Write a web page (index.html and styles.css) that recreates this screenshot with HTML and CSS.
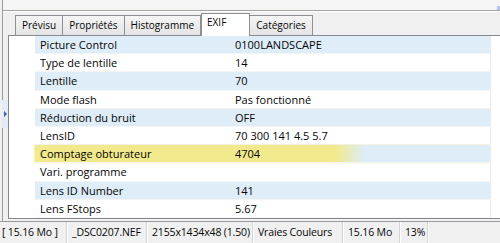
FILE: index.html
```html
<!DOCTYPE html>
<html>
	<head>
		<meta charset="utf-8">
		<title>EXIF</title>
		<link rel="stylesheet" href="styles.css">
	</head>
	<body>
		<div class="frame">
			<div class="topfield"><span class="scrollnub"></span></div>

			<div class="tabs">
				<div class="tab">Prévisu</div>
				<div class="tab">Propriétés</div>
				<div class="tab">Histogramme</div>
				<div class="tab active">EXIF</div>
				<div class="tab">Catégories</div>
			</div>

			<div class="panel">
				<div class="splitter">
					<div class="grip"><span class="arrow"></span></div>
				</div>
				<div class="grid">
					<div class="row alt"><span class="name">Picture Control</span><span class="val">0100LANDSCAPE</span></div>
					<div class="row"><span class="name">Type de lentille</span><span class="val">14</span></div>
					<div class="row alt"><span class="name">Lentille</span><span class="val">70</span></div>
					<div class="row"><span class="name">Mode flash</span><span class="val">Pas fonctionné</span></div>
					<div class="row alt"><span class="name">Réduction du bruit</span><span class="val">OFF</span></div>
					<div class="row"><span class="name">LensID</span><span class="val">70 300 141 4.5 5.7</span></div>
					<div class="row alt marked"><span class="name">Comptage obturateur</span><span class="val">4704</span></div>
					<div class="row"><span class="name">Vari. programme</span><span class="val"></span></div>
					<div class="row alt"><span class="name">Lens ID Number</span><span class="val">141</span></div>
					<div class="row"><span class="name">Lens FStops</span><span class="val">5.67</span></div>
				</div>
			</div>
		</div>

		<div class="status">
			<span class="cell size">[ 15.16 Mo ]</span>
			<span class="cell file">_DSC0207.NEF</span>
			<span class="cell dims">2155x1434x48 (1.50)</span>
			<span class="cell mode">Vraies Couleurs</span>
			<span class="cell mem">15.16 Mo</span>
			<span class="cell zoom">13%</span>
		</div>
	</body>
</html>
```

FILE: styles.css
```css
body{
	margin: 0;
	width: 500px;
	height: 243px;
	overflow: hidden;
	background-color: #f0f0f0;
	font-family: 'Open Sans', 'Liberation Sans', sans-serif;
	font-size: 11px;
	color: #050505;
}

/* cadre gauche qui descend jusqu'a la barre d'etat */
.frame{
	margin-left: 2px;
	border-left: 1px solid #9c9c9c;
	height: 221px;
}

/* bout de champ coupe en haut */
.topfield{
	position: relative;
	height: 10px;
	background-color: #f5f5f5;
	border-bottom: 1px solid #a3a3a3;
	box-shadow: 0 1px 0 #fff;
}
.scrollnub{
	position: absolute;
	right: 0;
	top: 6px;
	width: 3px;
	height: 4px;
	background-color: #b8c4e6;
}

/* onglets */
.tabs{
	display: flex;
	align-items: flex-end;
	height: 24px;
	padding-left: 12px;
	font-size: 10px;
}
.tab{
	height: 19px;
	line-height: 19px;
	padding: 0 6px;
	border: 1px solid #8d8f94;
	border-bottom: none;
	margin-right: -1px;
	background: linear-gradient(#f5f5f5, #e4e4e4);
}
.tab.active{
	position: relative;
	z-index: 1;
	height: 22px;
	line-height: 17px;
	margin: 0 -1px -1px 1px;
	padding: 0 23px 0 5px;
	background: #fff;
}

/* zone de la grille */
.panel{
	display: flex;
	height: 186px;
}
.splitter{
	width: 5px;
	display: flex;
	align-items: flex-start;
}
.grip{
	display: flex;
	align-items: center;
	width: 6px;
	height: 28px;
	margin: 65px 0 0 -1px;
	background-image: radial-gradient(#9fb0d6 40%, transparent 45%);
	background-size: 2px 2px;
	background-color: #e4eaf6;
}
.arrow{
	width: 0;
	height: 0;
	margin-left: 2px;
	border-style: solid;
	border-width: 3px 0 3px 3px;
	border-color: transparent transparent transparent #3b5ea8;
}

.grid{
	flex: 1;
	height: 182px;
	border: 1px solid #858990;
	border-right: none;
	background-color: #fff;
	padding-left: 26px;
}
.row{
	display: flex;
	height: 18.2px;
	line-height: 18px;
	box-sizing: border-box;
	border-bottom: 1px solid #f4f4f4;
	border-right: 1px solid #ececec;
	width: 456px;
}
.row.alt{
	background-color: #deedf7;
}
/* le compteur surligne au marqueur jaune */
.row.marked{
	background: linear-gradient(to right, #f2e98c 0, #f2e98c 300px, #deedf7 330px);
	box-shadow: -1px 0 2px #f6f0b0;
}
.name{
	width: 195px;
	padding-left: 5px;
	box-sizing: border-box;
}
.val{
	padding-left: 5px;
}

/* barre d'etat : panneaux de largeur fixe */
.status{
	display: flex;
	height: 21px;
	line-height: 21px;
	border-top: 1px solid #9a9a9a;
	font-size: 10.5px;
	letter-spacing: -0.15px;
}
.status .cell{
	box-sizing: border-box;
	padding-left: 5px;
	white-space: nowrap;
	overflow: hidden;
	border-right: 1px solid #d5d5d5;
	box-shadow: 1px 0 0 #fff;
}
.status .size{ width: 67px; padding-left: 2px; }
.status .file{ width: 80px; }
.status .dims{ width: 106px; }
.status .mode{ width: 90px; }
.status .mem{ width: 57px; }
.status .zoom{ width: 28px; }
```
